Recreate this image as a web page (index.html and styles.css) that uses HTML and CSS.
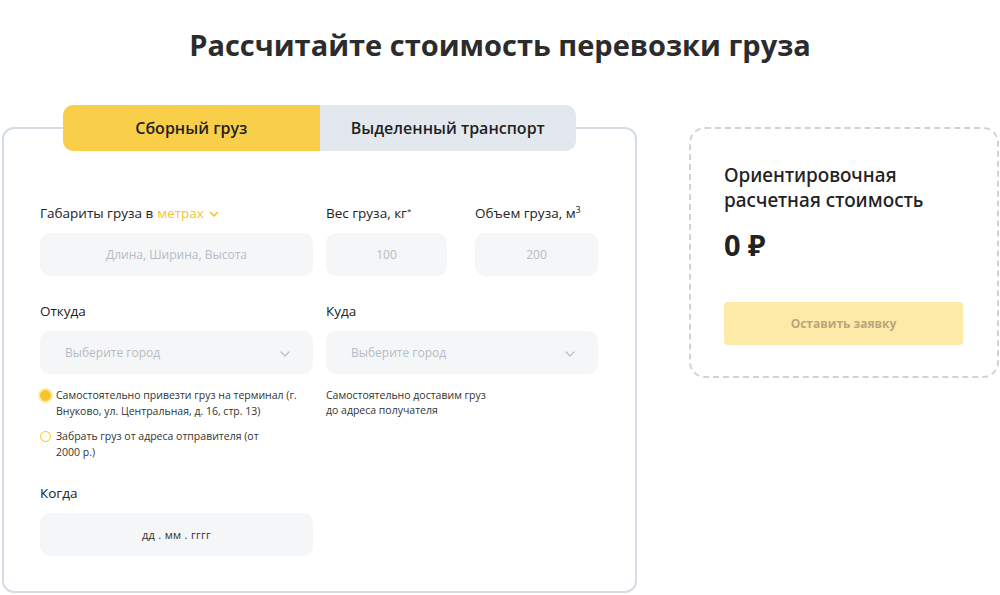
FILE: index.html
```html
<!DOCTYPE html>
<html lang="ru">
<head>
<meta charset="utf-8">
<link rel="stylesheet" href="styles.css">
</head>
<body>
<h1 class="title">Рассчитайте стоимость перевозки груза</h1>
<div class="layout">
  <section class="form-card">
    <div class="tabs">
      <div class="tab tab-active">Сборный груз</div>
      <div class="tab">Выделенный транспорт</div>
    </div>
    <div class="row row-dims">
      <div class="field">
        <div class="label">Габариты груза в <span class="unit">метрах</span>
          <svg class="unit-chev" width="10" height="7" viewBox="0 0 10 7"><path d="M1.5 1.5 L5 5 L8.5 1.5" fill="none" stroke="#f5c52c" stroke-width="1.6" stroke-linecap="round" stroke-linejoin="round"/></svg>
        </div>
        <div class="input">Длина, Ширина, Высота</div>
      </div>
      <div class="field">
        <div class="label">Вес груза, кг<sup class="star">*</sup></div>
        <div class="input">100</div>
      </div>
      <div class="field">
        <div class="label">Объем груза, м<sup class="sup">3</sup></div>
        <div class="input">200</div>
      </div>
    </div>
    <div class="row row-route">
      <div class="field">
        <div class="label">Откуда</div>
        <div class="input select">Выберите город
          <svg class="chev" width="12" height="8" viewBox="0 0 12 8"><path d="M2 2 L6 6 L10 2" fill="none" stroke="#b9bfc8" stroke-width="1.2" stroke-linecap="round" stroke-linejoin="round"/></svg>
        </div>
        <div class="options">
          <div class="radio-row"><span class="radio radio-on"></span><span class="radio-text">Самостоятельно привезти груз на терминал (г.<br>Внуково, ул. Центральная, д. 16, стр. 13)</span></div>
          <div class="radio-row"><span class="radio"></span><span class="radio-text">Забрать груз от адреса отправителя (от<br>2000 р.)</span></div>
        </div>
      </div>
      <div class="field">
        <div class="label">Куда</div>
        <div class="input select">Выберите город
          <svg class="chev" width="12" height="8" viewBox="0 0 12 8"><path d="M2 2 L6 6 L10 2" fill="none" stroke="#b9bfc8" stroke-width="1.2" stroke-linecap="round" stroke-linejoin="round"/></svg>
        </div>
        <div class="options">
          <div class="note">Самостоятельно доставим груз<br>до адреса получателя</div>
        </div>
      </div>
    </div>
    <div class="row row-date">
      <div class="field">
        <div class="label">Когда</div>
        <div class="input date">дд . мм . гггг</div>
      </div>
    </div>
  </section>
  <aside class="price-card">
    <div class="price-title">Ориентировочная<br>расчетная стоимость</div>
    <div class="price-value">0 ₽</div>
    <div class="price-btn">Оставить заявку</div>
  </aside>
</div>
</body>
</html>
```

FILE: styles.css
```css
* { box-sizing: border-box; }
html, body { margin: 0; padding: 0; background: #fff; }
body {
  width: 1000px;
  height: 595px;
  overflow: hidden;
  font-family: "Open Sans", "Noto Sans", sans-serif;
  color: #222;
}
.title {
  margin: 25px 0 0;
  height: 40px;
  line-height: 40px;
  text-align: center;
  font-family: "Open Sans", sans-serif;
  font-weight: 700;
  font-size: 29px;
  color: #2c2c2c;
}
.layout {
  display: flex;
  align-items: flex-start;
  margin-top: 62px;
  padding-left: 2px;
  gap: 52px;
}
.form-card {
  width: 635px;
  height: 466px;
  border: 2px solid #d6dce4;
  border-radius: 12px;
  padding: 0 36px;
}
.tabs {
  display: flex;
  margin: -24px 0 0 23px;
  width: 513px;
  height: 46px;
  border-radius: 10px;
  overflow: hidden;
}
.tab {
  flex: 1;
  display: flex;
  align-items: center;
  justify-content: center;
  background: #e3e8ef;
  font-size: 16px;
  font-weight: 600;
  color: #1f1f1f;
}
.tab-active { background: #f9cf4a; }
.row { display: flex; }
.row-dims { margin-top: 53px; }
.row-route { margin-top: 26px; }
.row-date { margin-top: 24px; }
.row-dims .field:nth-child(1) { width: 273px; margin-right: 13px; }
.row-dims .field:nth-child(2) { width: 121px; margin-right: 28px; }
.row-dims .field:nth-child(3) { width: 123px; }
.row-route .field { width: 273px; }
.row-route .field + .field { margin-left: 13px; width: 272px; }
.row-date .field { width: 273px; }
.label {
  height: 18px;
  line-height: 18px;
  font-size: 13.5px;
  color: #222;
  display: flex;
  align-items: center;
  white-space: nowrap;
}
.unit { color: #f5c52c; margin-left: 4px; }
.unit-chev { margin-left: 5px; margin-top: 3px; }
.star { font-size: 8px; align-self: flex-start; margin-top: -2px; }
.sup { font-size: 9px; align-self: flex-start; margin-top: -3px; }
.input {
  margin-top: 11px;
  height: 43px;
  border-radius: 10px;
  background: #f4f6f8;
  display: flex;
  align-items: center;
  justify-content: center;
  font-size: 12px;
  color: #b7bcc4;
}
.select {
  justify-content: space-between;
  padding: 0 22px 0 25px;
}
.chev { margin-top: 2px; }
.date { color: #333; font-size: 11px; letter-spacing: 0.3px; }
.options { margin-top: 13px; }
.radio-row {
  display: flex;
  align-items: flex-start;
  font-size: 10.5px;
  line-height: 16px;
  color: #333;
}
.radio-row + .radio-row { margin-top: 9px; }
.radio {
  flex: none;
  width: 11px;
  height: 11px;
  border-radius: 50%;
  border: 1.5px solid #f5c52c;
  margin: 3px 5px 0 0;
  background: #fff;
}
.radio-on {
  background: #f5c52c;
  box-shadow: 0 0 0 2px #fdeba8;
  border-color: #f5c52c;
}
.radio-text { white-space: nowrap; }
.note {
  font-size: 10.5px;
  line-height: 15px;
  color: #333;
  padding-top: 1px;
}
.price-card {
  width: 310px;
  height: 251px;
  border: 2px dashed #cfd3d9;
  border-radius: 16px;
  padding: 34px 34px 0 33px;
}
.price-title {
  font-family: "Noto Sans", sans-serif;
  font-size: 19px;
  line-height: 25px;
  color: #222;
  font-weight: 500;
}
.price-value {
  margin-top: 12px;
  font-size: 29px;
  line-height: 40px;
  font-weight: 700;
  color: #222;
}
.price-btn {
  margin-top: 37px;
  height: 43px;
  border-radius: 4px;
  background: #fdeaa9;
  display: flex;
  align-items: center;
  justify-content: center;
  font-size: 12px;
  font-weight: 700;
  color: #b7a77a;
}
```
